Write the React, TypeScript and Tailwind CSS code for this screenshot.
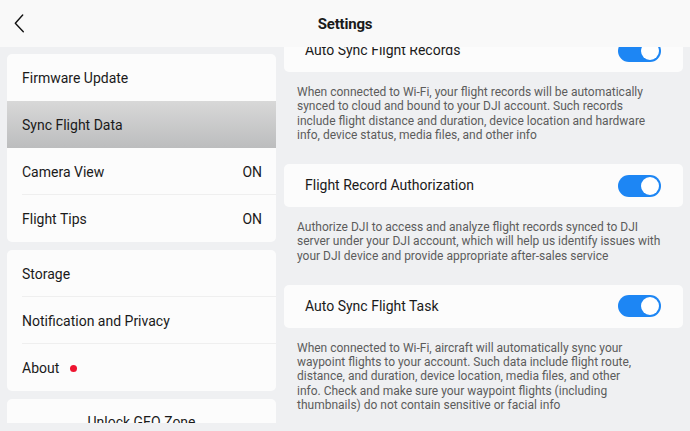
import React from 'react'

type Row = { label: string; value?: string; dot?: boolean; selected?: boolean }

const group1: Row[] = [
  { label: 'Firmware Update' },
  { label: 'Sync Flight Data', selected: true },
  { label: 'Camera View', value: 'ON' },
  { label: 'Flight Tips', value: 'ON' },
]

const group2: Row[] = [
  { label: 'Storage' },
  { label: 'Notification and Privacy' },
  { label: 'About', dot: true },
]

// lines kept as in the app so the wrapping matches
const sections = [
  {
    title: 'Auto Sync Flight Records',
    lines: [
      'When connected to Wi-Fi, your flight records will be automatically',
      'synced to cloud and bound to your DJI account. Such records',
      'include flight distance and duration, device location and hardware',
      'info, device status, media files, and other info',
    ],
  },
  {
    title: 'Flight Record Authorization',
    lines: [
      'Authorize DJI to access and analyze flight records synced to DJI',
      'server under your DJI account, which will help us identify issues with',
      'your DJI device and provide appropriate after-sales service',
    ],
  },
  {
    title: 'Auto Sync Flight Task',
    lines: [
      'When connected to Wi-Fi, aircraft will automatically sync your',
      'waypoint flights to your account. Such data include flight route,',
      'distance, and duration, device location, media files, and other',
      'info. Check and make sure your waypoint flights (including',
      'thumbnails) do not contain sensitive or facial info',
    ],
  },
]

function MenuGroup({ rows }: { rows: Row[] }) {
  return (
    <div className="bg-[#fcfcfc] rounded-[5px] overflow-hidden shrink-0">
      {rows.map((row, i) => {
        const nextSelected = rows[i + 1]?.selected
        const showLine = i < rows.length - 1 && !row.selected && !nextSelected
        return (
          <div
            key={row.label}
            className={
              row.selected
                ? 'h-[47px] flex items-center pl-[15px] pr-[14px] pt-px bg-linear-to-b from-[#d8d8d8] to-[#bcbdbe]'
                : 'h-[47px] flex items-center pl-[15px] pr-[14px] pt-px relative'
            }
          >
            <span className="text-[14px] text-[#1a1a1a]">{row.label}</span>
            {row.dot && <span className="ml-[11px] w-[7px] h-[7px] rounded-full bg-[#ee1530]" />}
            {row.value && <span className="ml-auto text-[14px] text-[#1a1a1a]">{row.value}</span>}
            {showLine && <div className="absolute left-[15px] right-0 bottom-0 h-px bg-[#efefef]" />}
          </div>
        )
      })}
    </div>
  )
}

function Toggle() {
  return (
    <div className="relative w-[43px] h-[22px] rounded-full bg-[#1d86f4] shrink-0">
      <div className="absolute right-[2px] top-[2px] w-[18px] h-[18px] rounded-full bg-white" />
    </div>
  )
}

export default function App() {
  return (
    <div
      className="w-[690px] h-[431px] flex flex-col bg-[#eff0f2] overflow-hidden"
      style={{ fontFamily: 'Roboto, "Noto Sans", sans-serif' }}
    >
      <header className="h-[47px] shrink-0 bg-[#f9f9f9] relative flex items-center justify-center pt-px z-10">
        <svg className="absolute left-[12px] top-[13px]" width="16" height="22" viewBox="0 0 16 22" fill="none">
          <path d="M10.7 2 L3.3 10.3 L11.3 18.7" stroke="#111" strokeWidth="1.4" strokeLinecap="round" strokeLinejoin="round" />
        </svg>
        <h1 className="text-[15px] font-bold text-[#1a1a1a] tracking-[-0.2px]">Settings</h1>
      </header>

      <div className="flex-1 flex gap-[8px] px-[7px] min-h-0">
        <div className="w-[269px] shrink-0 pt-[7px] pb-[8px] flex flex-col min-h-0">
          <div className="flex-1 min-h-0 overflow-hidden flex flex-col gap-[8px]">
            <MenuGroup rows={group1} />
            <MenuGroup rows={group2} />
            <div className="bg-[#fcfcfc] rounded-[5px] h-[47px] shrink-0 flex items-center justify-center">
              <span className="text-[14px] text-[#1a1a1a]">Unlock GEO Zone</span>
            </div>
          </div>
        </div>

        <div className="flex-1 min-h-0 overflow-hidden">
          <div className="-mt-[18px] flex flex-col">
            {sections.map((s) => (
              <div key={s.title} className="mb-[22px]">
                <div className="h-[43px] bg-[#fcfcfc] rounded-[5px] flex items-center pl-[21px] pr-[22px]">
                  <span className="text-[14px] text-[#1a1a1a]">{s.title}</span>
                  <div className="ml-auto">
                    <Toggle />
                  </div>
                </div>
                <p className="mt-[13px] pl-[13px] text-[12px] leading-[14.25px] text-[#5c5c5c]">
                  {s.lines.map((l) => (
                    <span key={l} className="block whitespace-nowrap">{l}</span>
                  ))}
                </p>
              </div>
            ))}
          </div>
        </div>
      </div>
    </div>
  )
}
